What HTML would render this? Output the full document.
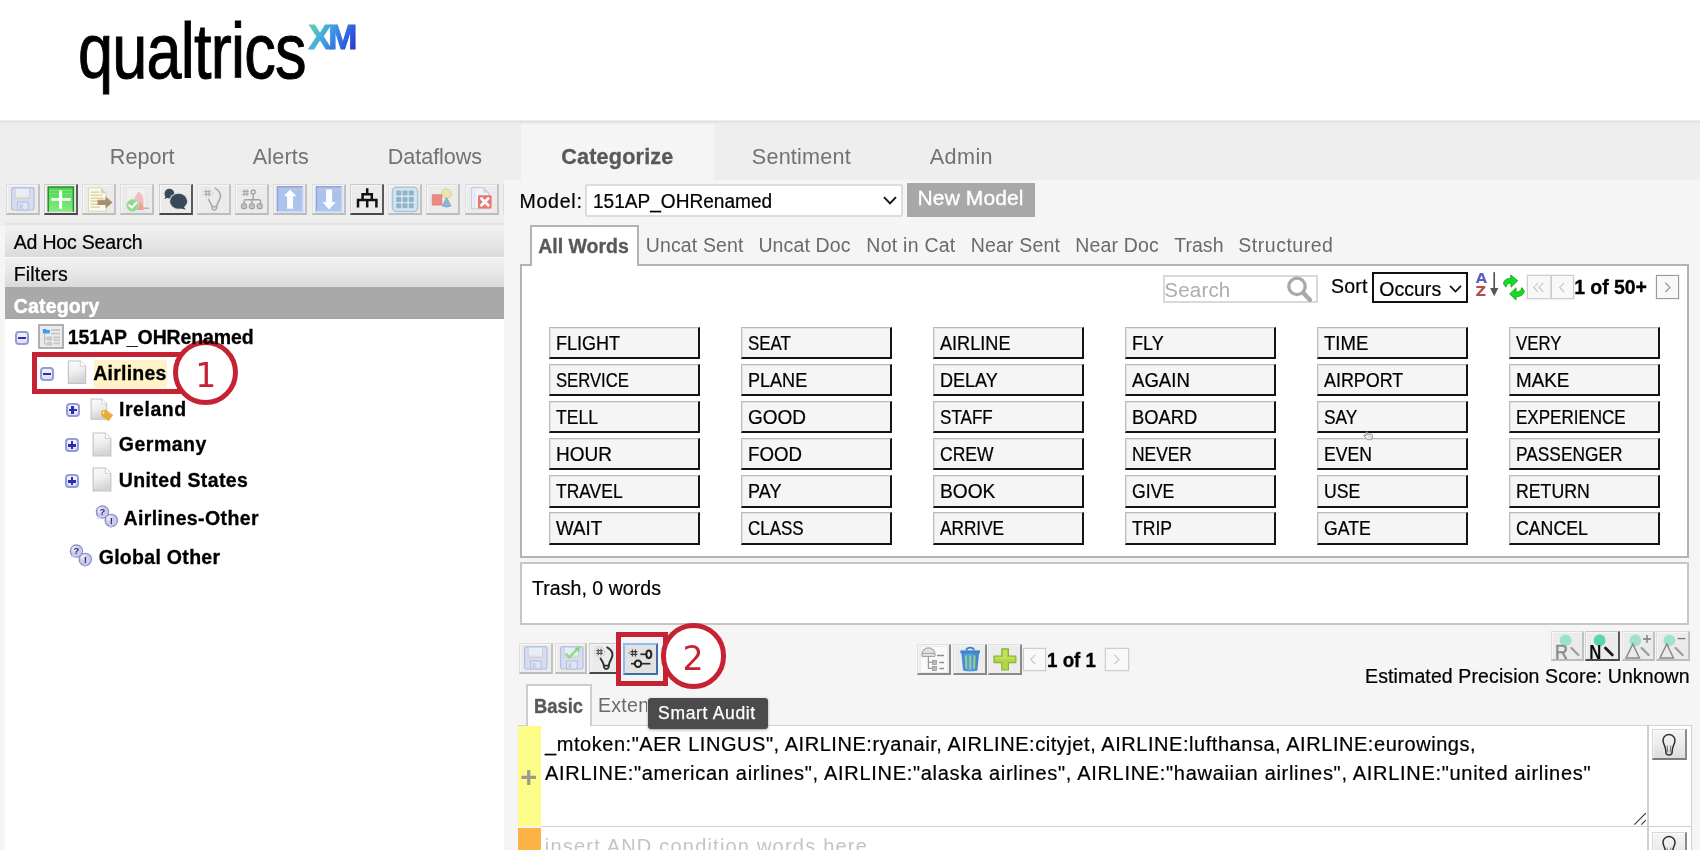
<!DOCTYPE html>
<html lang="en"><head><meta charset="utf-8"><title>Qualtrics XM - Categorize</title>
<style>
html,body{margin:0;padding:0;background:#f5f5f5;}
body{width:1700px;height:850px;overflow:hidden;font-family:"Liberation Sans",sans-serif;}
#page{will-change:transform;position:relative;width:1700px;height:850px;overflow:hidden;background:#f5f5f5;}
#page div{position:absolute;box-sizing:border-box;}
#page svg{position:absolute;left:0;top:0;overflow:visible;}
.t{position:absolute;white-space:pre;line-height:1;}
.btn{background:#ebebeb;border:solid;border-width:1px 2px 2px 1px;border-color:#dcdcdc #c2c2c2 #bcbcbc #dedede;box-shadow:inset 1px 1px 0 rgba(255,255,255,.55);}
.btn.on{border-color:#c8c8c8 #5a5a5a #4a4a4a #d0d0d0;}
.word{background:#f5f5f5;border:solid;border-width:1px 2px 2px 1px;border-color:#b9b9b9 #141414 #141414 #bdbdbd;box-shadow:inset 1px 1px 0 #e4e4e4;}
.pg{background:#f8f8f8;border:1px solid #cdcdcd;box-shadow:0 0 0 .5px #e4e4e4;}

</style></head>
<body>
<div id="page">
<div  style="left:0px;top:0px;width:1700px;height:120px;background:#fff;"></div>
<div  style="left:0px;top:119.6px;width:1700px;height:4.8px;background:linear-gradient(#f6f6f6,#dfdfdf 38%,#e7e7e7 62%,#eeeeee);z-index:1;"></div>
<div  style="left:0px;top:122px;width:1700px;height:58px;background:#eeeeee;"></div>
<div  style="left:0px;top:180px;width:504px;height:46px;background:#eeeeee;"></div>
<svg style="left:300px;top:15px" width="70" height="45" viewBox="0 0 70 45"><defs><linearGradient id="gXM" gradientUnits="userSpaceOnUse" x1="9" y1="9" x2="55" y2="36"><stop offset="0" stop-color="#62d6ac"/><stop offset=".4" stop-color="#3fa0e6"/><stop offset=".75" stop-color="#2f5fe0"/><stop offset="1" stop-color="#2a35d6"/></linearGradient></defs><text x="8.2" y="34.2" font-family="Liberation Sans, sans-serif" font-size="35" font-weight="700" letter-spacing="-3.4" fill="url(#gXM)" stroke="url(#gXM)" stroke-width="0.9">XM</text></svg>
<div  style="left:521px;top:124px;width:193px;height:56px;background:#f5f5f5;"></div>
<div class="btn" style="left:5.5px;top:184px;width:34px;height:30.6px;"></div>
<svg style="left:5.5px;top:184px;" width="34" height="31" viewBox="0 0 34 31"><rect x="5.6" y="3.6" width="22.4" height="22.4" rx="2.2" fill="#d6dcf2" stroke="#b6bfde" stroke-width="1.2"/><rect x="9.2" y="4.2" width="14.2" height="10.2" fill="#e9edf7" stroke="#c3cbe2" stroke-width=".8"/><rect x="9.6" y="12.6" width="13.4" height="1.4" fill="#eadfbe"/><rect x="11.6" y="18" width="10.6" height="8" fill="#dfe5f5" stroke="#b3bdda" stroke-width="1"/><rect x="13.6" y="20.2" width="3" height="5" fill="#c3cce4"/></svg>
<div class="btn on" style="left:43.75px;top:184px;width:34px;height:30.6px;"></div>
<svg style="left:43.75px;top:184px;" width="34" height="31" viewBox="0 0 34 31"><defs><linearGradient id="gA" x1="0" y1="0" x2="0" y2="1"><stop offset="0" stop-color="#4ed44e"/><stop offset=".45" stop-color="#62e262"/><stop offset="1" stop-color="#86ea86"/></linearGradient></defs><rect x="4.2" y="3" width="25.2" height="24.8" fill="url(#gA)"/><path d="M4.2 27.8 V3 H29.4 V27.8" fill="none" stroke="#2f8a2f" stroke-width="1.5"/><rect x="5.5" y="6" width="22.6" height="1" fill="#fff" opacity=".25"/><rect x="5.5" y="9" width="22.6" height="1" fill="#fff" opacity=".2"/><rect x="7.4" y="14" width="19.2" height="2.8" fill="#fff"/><rect x="15.1" y="6.2" width="3" height="18.6" fill="#fff"/></svg>
<div class="btn" style="left:82.0px;top:184px;width:34px;height:30.6px;"></div>
<svg style="left:82.0px;top:184px;" width="34" height="31" viewBox="0 0 34 31"><path d="M6.5 4 H19 L24.4 9.5 V27.2 H6.5 Z" fill="#fcfaec" stroke="#dcd6bf" stroke-width="1"/><path d="M19 4 V9.5 H24.4 Z" fill="#d9d3bd"/><g stroke="#d9cc96" stroke-width="1.3"><path d="M8.5 8.2H17.5M8.5 11.2H20M8.5 14.2H21.5M8.5 17.2H16M8.5 20.2H16M8.5 23.2H18"/></g><path d="M15.5 16 H23.6 V12.6 L30.4 18.5 L23.6 24.4 V21 H15.5 Z" fill="#a58d6d"/><path d="M15.5 16 H23.6 V12.6 L30.4 18.5" fill="none" stroke="#c4b294" stroke-width=".8"/></svg>
<div class="btn" style="left:120.25px;top:184px;width:34px;height:30.6px;"></div>
<svg style="left:120.25px;top:184px;" width="34" height="31" viewBox="0 0 34 31"><g opacity=".82"><rect x="6.2" y="3.6" width="20" height="23.4" fill="#f2f2f2" stroke="#e2e2e2" stroke-width="1"/><path d="M18.5 7.5 C22 9 24 14 23.6 20 L23.8 26 H14 C14 20 13 17 15 13 C16 10.5 17.5 9 18.5 7.5Z" fill="#f5b3b6"/><path d="M19.5 18 C22 19 23.6 22 23.7 26 H17 C17 23 18 20 19.5 18Z" fill="#f18f80"/><path d="M24 24.2 H29" stroke="#9a9a9a" stroke-width="1.2"/><circle cx="12.6" cy="21.4" r="6" fill="#7fd67c"/><circle cx="12.6" cy="21.4" r="6" fill="none" stroke="#a6e3a3" stroke-width="1"/><path d="M9.2 21.2 L11.8 23.8 L16.4 18.8" fill="none" stroke="#fff" stroke-width="2" stroke-linecap="round" stroke-linejoin="round"/></g></svg>
<div class="btn on" style="left:158.5px;top:184px;width:34px;height:30.6px;"></div>
<svg style="left:158.5px;top:184px;" width="34" height="31" viewBox="0 0 34 31"><circle cx="10.4" cy="9.6" r="4.9" fill="#3a4957"/><path d="M6.5 12 L5.6 15 L9.4 13.6Z" fill="#3a4957"/><ellipse cx="19.4" cy="17.2" rx="9.3" ry="8.3" fill="#cfd6dd"/><ellipse cx="19.6" cy="17.3" rx="8.5" ry="7.5" fill="#3a4957"/><path d="M23.5 22 L27 25.6 L21.5 24.4Z" fill="#3a4957"/></svg>
<div class="btn" style="left:196.75px;top:184px;width:34px;height:30.6px;"></div>
<svg style="left:196.75px;top:184px;" width="34" height="31" viewBox="0 0 34 31"><g fill="none" stroke="#a9a9a9" stroke-width="1.6" stroke-linecap="round" stroke-linejoin="round"><path d="M18.2 4.4 C21 6 23.8 9 23.4 12.6 C23 15.6 20.6 18.2 20 21.4 L19.4 24.6 C19 26.4 15.6 26.4 15.2 24.6 L14.6 21.6 C14.2 19.4 12.6 17.6 11.6 15.6"/><path d="M15.4 22.6 H19.6"/></g><g stroke="#adadad" stroke-width="1.2"><path d="M7.4 7.6H13.8M7.4 10.4H13.8M9.2 5.8V12.2M12 5.8V12.2"/></g><circle cx="10.6" cy="9" r="5.2" fill="none" stroke="#adadad" stroke-width=".7" stroke-dasharray="1.2 1.6" opacity=".6"/></svg>
<div class="btn" style="left:235.0px;top:184px;width:34px;height:30.6px;"></div>
<svg style="left:235.0px;top:184px;" width="34" height="31" viewBox="0 0 34 31"><g stroke="#a9a9a9" stroke-width="1.2"><path d="M7.4 7.4H13.8M7.4 10.2H13.8M9.2 5.6V12M12 5.6V12"/></g><g fill="none" stroke="#a2a2a2" stroke-width="1.4"><circle cx="18.2" cy="8" r="2"/><path d="M18.2 10V15.8M9 19.6V17.4Q9 15.8 10.6 15.8H24Q25.6 15.8 25.6 17.4V19.6M16.9 15.8V19.6"/><circle cx="9" cy="22.3" r="2.5"/><circle cx="16.9" cy="22.3" r="2.5"/><circle cx="24.7" cy="22.3" r="2.5"/></g><g fill="#b5b5b5"><circle cx="9" cy="22.3" r="1.2"/><circle cx="16.9" cy="22.3" r="1.2"/><circle cx="24.7" cy="22.3" r="1.2"/></g></svg>
<div class="btn" style="left:273.25px;top:184px;width:34px;height:30.6px;"></div>
<svg style="left:273.25px;top:184px;" width="34" height="31" viewBox="0 0 34 31"><defs><linearGradient id="gU" x1="0" y1="0" x2="0" y2="1"><stop offset="0" stop-color="#b5c4e6"/><stop offset=".35" stop-color="#a9c2ec"/><stop offset="1" stop-color="#aac6f0"/></linearGradient></defs><rect x="4.4" y="2.8" width="25.4" height="25" fill="url(#gU)"/><path d="M4.4 27.8 V2.8 H29.8" fill="none" stroke="#90a3d8" stroke-width="1.4"/><path d="M29.8 2.8 V27.8 H4.4" fill="none" stroke="#c9d8f4" stroke-width="1.4"/><path d="M17 5.4 L23.4 12.2 H20.1 V24.8 H14.1 V12.2 H10.8 Z" fill="#fdfdfe"/></svg>
<div class="btn" style="left:311.5px;top:184px;width:34px;height:30.6px;"></div>
<svg style="left:311.5px;top:184px;" width="34" height="31" viewBox="0 0 34 31"><defs><linearGradient id="gD" x1="0" y1="0" x2="0" y2="1"><stop offset="0" stop-color="#b5c4e6"/><stop offset=".35" stop-color="#a9c2ec"/><stop offset="1" stop-color="#aac6f0"/></linearGradient></defs><rect x="4.4" y="2.8" width="25.4" height="25" fill="url(#gD)"/><path d="M4.4 27.8 V2.8 H29.8" fill="none" stroke="#90a3d8" stroke-width="1.4"/><path d="M29.8 2.8 V27.8 H4.4" fill="none" stroke="#c9d8f4" stroke-width="1.4"/><path d="M14.1 5.4 H20.1 V18 H23.8 L17.1 25.4 L10.4 18 H14.1 Z" fill="#fdfdfe"/></svg>
<div class="btn on" style="left:349.75px;top:184px;width:34px;height:30.6px;"></div>
<svg style="left:349.75px;top:184px;" width="34" height="31" viewBox="0 0 34 31"><g fill="none" stroke="#111" stroke-width="2.5" stroke-linejoin="miter"><path d="M17.2 4.2V10M12.6 16V10.2H21.8V16M8 23.4V16H26.4V23.4M17.2 16V23.4"/></g></svg>
<div class="btn" style="left:388.0px;top:184px;width:34px;height:30.6px;"></div>
<svg style="left:388.0px;top:184px;" width="34" height="31" viewBox="0 0 34 31"><rect x="4.6" y="3.2" width="25" height="24.4" rx="4.2" fill="#d6e4ef" stroke="#a9c5da" stroke-width="1.5"/><g fill="#8fb3cb"><rect x="8.2" y="6.6" width="5" height="5" rx="1"/><rect x="8.2" y="12.9" width="5" height="5" rx="1"/><rect x="8.2" y="19.2" width="5" height="5" rx="1"/><rect x="14.5" y="6.6" width="5" height="5" rx="1"/><rect x="14.5" y="12.9" width="5" height="5" rx="1"/><rect x="14.5" y="19.2" width="5" height="5" rx="1"/><rect x="20.8" y="6.6" width="5" height="5" rx="1"/><rect x="20.8" y="12.9" width="5" height="5" rx="1"/><rect x="20.8" y="19.2" width="5" height="5" rx="1"/></g></svg>
<div class="btn" style="left:426.25px;top:184px;width:34px;height:30.6px;"></div>
<svg style="left:426.25px;top:184px;" width="34" height="31" viewBox="0 0 34 31"><circle cx="20.5" cy="9.6" r="4.8" fill="#ebe5ae" stroke="#d6cf90" stroke-width="1"/><path d="M20.6 13.6 L25 22 Q20.6 24 16.2 22 Z" fill="#8db5d6" stroke="#7aa3c6" stroke-width=".8"/><rect x="6.2" y="10.8" width="9.6" height="10.2" fill="#ea8b82" stroke="#dc7a72" stroke-width=".8"/></svg>
<div class="btn" style="left:464.5px;top:184px;width:34px;height:30.6px;"></div>
<svg style="left:464.5px;top:184px;" width="34" height="31" viewBox="0 0 34 31"><path d="M6.6 3.6 H18.4 L23.6 8.8 V24.8 H6.6 Z" fill="#eff2f9" stroke="#c6cfe2" stroke-width="1.1"/><path d="M18.4 3.6 V8.8 H23.6 Z" fill="#cdd5e6"/><path d="M9.4 4.2V24" stroke="#dfe4f0" stroke-width="1.4"/><rect x="13" y="11.3" width="13.6" height="13.2" rx="1" fill="#e9776f"/><path d="M16.4 14.6 L23.2 21.2 M23.2 14.6 L16.4 21.2" stroke="#fff" stroke-width="2.8" stroke-linecap="round"/></svg>
<div  style="left:502.6px;top:184px;width:1.3px;height:30.6px;background:#dddddd;"></div>
<div  style="left:5px;top:223.2px;width:499px;height:1.6px;background:#e2e2e2;"></div>
<div  style="left:5px;top:225.8px;width:499px;height:31px;background:linear-gradient(#f1f1f1,#e6e6e6 55%,#dadada);"></div>
<div  style="left:5px;top:256.8px;width:499px;height:1.6px;background:#fafafa;"></div>
<div  style="left:5px;top:258.3px;width:499px;height:29px;background:linear-gradient(#f1f1f1,#e6e6e6 55%,#dadada);"></div>
<div  style="left:5px;top:287px;width:499px;height:31.7px;background:#a9a9a9;border-bottom:1px solid #a0a0a0;"></div>
<div  style="left:5px;top:319px;width:499px;height:531px;background:#fff;"></div>
<div  style="left:14.6px;top:331px;width:14px;height:14px;border:2px solid #969bd8;border-radius:4px;background:linear-gradient(#f6f6ff,#dcdff6);"></div>
<div  style="left:17.6px;top:337px;width:8px;height:2.4px;background:#2a2fb0;"></div>
<svg style="left:38px;top:324px;" width="26" height="25" viewBox="0 0 26 25"><rect x="1" y="1" width="24" height="23" fill="#ebebeb" stroke="#a9a9a9" stroke-width="1.8"/><path d="M4.8 5 H8 L8.8 6 H11.8 V9.4 H4.8 Z" fill="#3d9be9"/><g fill="#c9c9c9"><rect x="13" y="5" width="9" height="2"/><rect x="13" y="8.6" width="9" height="2"/><rect x="9" y="12.4" width="5" height="4.2"/><rect x="15.4" y="12.4" width="6.6" height="2"/><rect x="15.4" y="15.4" width="6.6" height="1.6"/><rect x="9" y="18" width="5" height="3.6"/><rect x="15.4" y="18.4" width="6.6" height="2"/></g><path d="M6.6 10 V20 H9 M6.6 14.4 H9" fill="none" stroke="#bdbdbd" stroke-width="1.1"/></svg>
<div  style="left:94px;top:360px;width:72.5px;height:28px;background:#fff2c6;"></div>
<div  style="left:40.3px;top:366.6px;width:14px;height:14px;border:2px solid #969bd8;border-radius:4px;background:linear-gradient(#f6f6ff,#dcdff6);"></div>
<div  style="left:43.3px;top:372.6px;width:8px;height:2.4px;background:#2a2fb0;"></div>
<svg style="left:66.6px;top:360px;" width="20" height="24.5" viewBox="0 0 20 25"><defs><linearGradient id="gP" x1="0" y1="0" x2="0.25" y2="1"><stop offset="0" stop-color="#fbfbfb"/><stop offset=".5" stop-color="#f0f0f0"/><stop offset="1" stop-color="#d4d4d4"/></linearGradient></defs><path d="M1.2 1 H13.4 L18.8 6.4 V23.8 H1.2 Z" fill="url(#gP)" stroke="#c4c4c4" stroke-width="1.2"/><path d="M13.4 1 V6.4 H18.8" fill="#fff" stroke="#cfcfcf" stroke-width="1"/></svg>
<div  style="left:65.6px;top:402.6px;width:14px;height:14px;border:2px solid #969bd8;border-radius:4px;background:linear-gradient(#f6f6ff,#dcdff6);"></div>
<div  style="left:68.6px;top:408.6px;width:8px;height:2.4px;background:#2a2fb0;"></div>
<div  style="left:71.39999999999999px;top:405.6px;width:2.4px;height:8px;background:#2a2fb0;"></div>
<svg style="left:89.6px;top:396.5px;" width="24" height="24.5" viewBox="0 0 27 25"><defs><linearGradient id="gQ" x1="0" y1="0" x2="0.25" y2="1"><stop offset="0" stop-color="#fbfbfb"/><stop offset=".5" stop-color="#f0f0f0"/><stop offset="1" stop-color="#d4d4d4"/></linearGradient></defs><path d="M1.2 1 H13.4 L18.8 6.4 V23.8 H1.2 Z" fill="url(#gQ)" stroke="#c4c4c4" stroke-width="1.2"/><path d="M13.4 1 V6.4 H18.8" fill="#fff" stroke="#cfcfcf" stroke-width="1"/><g transform="translate(18.2,18.6) rotate(38)"><path d="M-7 0 L-3.6 -4.3 H6.6 V4.3 H-3.6 Z" fill="#e9ad3a"/><circle cx="-3.8" cy="0" r="1.1" fill="#fff3d0"/></g></svg>
<div  style="left:65.3px;top:438.4px;width:14px;height:14px;border:2px solid #969bd8;border-radius:4px;background:linear-gradient(#f6f6ff,#dcdff6);"></div>
<div  style="left:68.3px;top:444.4px;width:8px;height:2.4px;background:#2a2fb0;"></div>
<div  style="left:71.1px;top:441.4px;width:2.4px;height:8px;background:#2a2fb0;"></div>
<svg style="left:92.4px;top:431.7px;" width="20" height="25" viewBox="0 0 20 25"><defs><linearGradient id="gP" x1="0" y1="0" x2="0.25" y2="1"><stop offset="0" stop-color="#fbfbfb"/><stop offset=".5" stop-color="#f0f0f0"/><stop offset="1" stop-color="#d4d4d4"/></linearGradient></defs><path d="M1.2 1 H13.4 L18.8 6.4 V23.8 H1.2 Z" fill="url(#gP)" stroke="#c4c4c4" stroke-width="1.2"/><path d="M13.4 1 V6.4 H18.8" fill="#fff" stroke="#cfcfcf" stroke-width="1"/></svg>
<div  style="left:65.3px;top:474.2px;width:14px;height:14px;border:2px solid #969bd8;border-radius:4px;background:linear-gradient(#f6f6ff,#dcdff6);"></div>
<div  style="left:68.3px;top:480.2px;width:8px;height:2.4px;background:#2a2fb0;"></div>
<div  style="left:71.1px;top:477.2px;width:2.4px;height:8px;background:#2a2fb0;"></div>
<svg style="left:92.4px;top:467.4px;" width="20" height="25" viewBox="0 0 20 25"><defs><linearGradient id="gP" x1="0" y1="0" x2="0.25" y2="1"><stop offset="0" stop-color="#fbfbfb"/><stop offset=".5" stop-color="#f0f0f0"/><stop offset="1" stop-color="#d4d4d4"/></linearGradient></defs><path d="M1.2 1 H13.4 L18.8 6.4 V23.8 H1.2 Z" fill="url(#gP)" stroke="#c4c4c4" stroke-width="1.2"/><path d="M13.4 1 V6.4 H18.8" fill="#fff" stroke="#cfcfcf" stroke-width="1"/></svg>
<svg style="left:96px;top:506px;" width="22.5" height="22.5" viewBox="0 0 23 23"><g stroke="#8c8cc6" stroke-width="1.2" fill="#cbcbf2"><circle cx="6.6" cy="6.2" r="6.3"/><path d="M2.2 10.2 L1.2 13.4 L5.2 12Z" stroke="none"/><circle cx="15.6" cy="14.7" r="6.3"/><path d="M17.6 20.2 L15.2 23 L13.2 20.4Z" stroke="none" fill="#b9b9ea"/></g><circle cx="4.6" cy="4.2" r="2.8" fill="#fff" opacity=".5"/><circle cx="13.6" cy="12.6" r="2.8" fill="#fff" opacity=".5"/><text x="6.6" y="9.6" font-family="Liberation Sans, sans-serif" font-size="9.6" font-weight="700" text-anchor="middle" fill="#2e2e46">?</text><text x="15.6" y="18.4" font-family="Liberation Sans, sans-serif" font-size="9.8" font-weight="700" text-anchor="middle" fill="#2e2e46">!</text></svg>
<svg style="left:70.2px;top:545px;" width="22.5" height="22.5" viewBox="0 0 23 23"><g stroke="#8c8cc6" stroke-width="1.2" fill="#cbcbf2"><circle cx="6.6" cy="6.2" r="6.3"/><path d="M2.2 10.2 L1.2 13.4 L5.2 12Z" stroke="none"/><circle cx="15.6" cy="14.7" r="6.3"/><path d="M17.6 20.2 L15.2 23 L13.2 20.4Z" stroke="none" fill="#b9b9ea"/></g><circle cx="4.6" cy="4.2" r="2.8" fill="#fff" opacity=".5"/><circle cx="13.6" cy="12.6" r="2.8" fill="#fff" opacity=".5"/><text x="6.6" y="9.6" font-family="Liberation Sans, sans-serif" font-size="9.6" font-weight="700" text-anchor="middle" fill="#2e2e46">?</text><text x="15.6" y="18.4" font-family="Liberation Sans, sans-serif" font-size="9.8" font-weight="700" text-anchor="middle" fill="#2e2e46">!</text></svg>
<div  style="left:32px;top:352.1px;width:150px;height:41.5px;border:5.7px solid #c52233;"></div>
<div  style="left:173.1px;top:339.8px;width:65.2px;height:65.2px;border:5.7px solid #c52233;border-radius:50%;background:#fff;"></div>
<div  style="left:584.8px;top:184.2px;width:318.6px;height:32.7px;background:#fff;border:2px solid #dcdcdc;border-radius:2px;"></div>
<svg style="left:881.7px;top:194.3px;" width="16" height="12" viewBox="0 0 16 12"><path d="M2 3.2 L8 9.4 L14 3.2" fill="none" stroke="#111" stroke-width="1.9"/></svg>
<div  style="left:906.7px;top:183.2px;width:128.2px;height:34.3px;background:#a8a8a8;"></div>
<div  style="left:519.6px;top:264px;width:1169.8px;height:294px;background:#fff;border:2px solid #b3b3b3;"></div>
<div  style="left:529.5px;top:225px;width:109.5px;height:41px;background:#fff;border:2px solid #b3b3b3;border-bottom:none;"></div>
<div  style="left:1163px;top:275.2px;width:155.4px;height:27.8px;background:#fff;border:2px solid #d9d9d9;"></div>
<svg style="left:1287px;top:276.5px;" width="25" height="25" viewBox="0 0 25 25"><circle cx="10" cy="9.4" r="8.2" fill="none" stroke="#a9a9a9" stroke-width="3.3"/><path d="M16.6 16.2 L23 23" stroke="#a9a9a9" stroke-width="4.4" stroke-linecap="round"/></svg>
<div  style="left:1371.7px;top:272px;width:96.3px;height:31px;background:#fff;border:2px solid #111;"></div>
<svg style="left:1447.5px;top:282.5px;" width="15" height="11" viewBox="0 0 16 12"><path d="M2 3.2 L8 9.4 L14 3.2" fill="none" stroke="#111" stroke-width="1.9"/></svg>
<svg style="left:1475px;top:272px;" width="25" height="25" viewBox="0 0 25 25"><text x="6.5" y="10.9" font-family="DejaVu Sans, sans-serif" font-size="14.6" font-weight="700" text-anchor="middle" fill="#5d5dbd">A</text><text x="5.8" y="23.8" font-family="DejaVu Sans, sans-serif" font-size="14.6" font-weight="700" text-anchor="middle" fill="#b44c4c">Z</text><path d="M19.2 0.2 V18" stroke="#555" stroke-width="1.7"/><path d="M15.1 15.9 H23.3 L19.2 24.2 Z" fill="#555"/></svg>
<svg style="left:1502.5px;top:274.5px;" width="22" height="26" viewBox="0 0 22 26"><g fill="#16dc24" stroke="#0c9c16" stroke-width=".8" stroke-linejoin="round"><path d="M7.75 3.25 L7.75 -0.1 L14.75 5.8 L8.2 12.1 L7.75 7.9 C5 8 3.5 9 3.1 12.1 L0.55 9 C0.6 5.5 3 3.5 7.75 3.25 Z"/><path d="M13.05 21.7 L13.05 25.1 L6.7 18.9 L13.05 12.8 L13.05 17.2 C16.5 17 18.3 15.5 18.8 12.6 L21.3 16 C21 19.5 18 21.5 13.05 21.7 Z"/></g></svg>
<div class="pg" style="left:1527px;top:275.2px;width:23.8px;height:23.6px;"></div>
<div class="pg" style="left:1550.8px;top:275.2px;width:23.4px;height:23.6px;"></div>
<svg style="left:1532px;top:281.6px;" width="13" height="10.8" viewBox="0 0 15 13"><path d="M7 1 L1.6 6.5 L7 12 M13.4 1 L8 6.5 L13.4 12" fill="none" stroke="#cdcdcd" stroke-width="1.5"/></svg>
<svg style="left:1558.4px;top:281.6px;" width="7.6" height="10.8" viewBox="0 0 9 13"><path d="M7.4 1 L2 6.5 L7.4 12" fill="none" stroke="#c9c9c9" stroke-width="1.5"/></svg>
<div class="pg" style="left:1655.8px;top:275.2px;width:23.4px;height:23.6px;border-color:#9a9a9a;"></div>
<svg style="left:1663.6px;top:281.6px;" width="7.6" height="10.8" viewBox="0 0 9 13"><path d="M1.6 1 L7 6.5 L1.6 12" fill="none" stroke="#9a9a9a" stroke-width="1.6"/></svg>
<div class="word" style="left:548.9px;top:326.5px;width:151.3px;height:32.5px;"></div>
<div class="word" style="left:548.9px;top:363.6px;width:151.3px;height:32.5px;"></div>
<div class="word" style="left:548.9px;top:400.7px;width:151.3px;height:32.5px;"></div>
<div class="word" style="left:548.9px;top:437.9px;width:151.3px;height:32.5px;"></div>
<div class="word" style="left:548.9px;top:475.0px;width:151.3px;height:32.5px;"></div>
<div class="word" style="left:548.9px;top:512.1px;width:151.3px;height:32.5px;"></div>
<div class="word" style="left:740.9px;top:326.5px;width:151.3px;height:32.5px;"></div>
<div class="word" style="left:740.9px;top:363.6px;width:151.3px;height:32.5px;"></div>
<div class="word" style="left:740.9px;top:400.7px;width:151.3px;height:32.5px;"></div>
<div class="word" style="left:740.9px;top:437.9px;width:151.3px;height:32.5px;"></div>
<div class="word" style="left:740.9px;top:475.0px;width:151.3px;height:32.5px;"></div>
<div class="word" style="left:740.9px;top:512.1px;width:151.3px;height:32.5px;"></div>
<div class="word" style="left:932.9px;top:326.5px;width:151.3px;height:32.5px;"></div>
<div class="word" style="left:932.9px;top:363.6px;width:151.3px;height:32.5px;"></div>
<div class="word" style="left:932.9px;top:400.7px;width:151.3px;height:32.5px;"></div>
<div class="word" style="left:932.9px;top:437.9px;width:151.3px;height:32.5px;"></div>
<div class="word" style="left:932.9px;top:475.0px;width:151.3px;height:32.5px;"></div>
<div class="word" style="left:932.9px;top:512.1px;width:151.3px;height:32.5px;"></div>
<div class="word" style="left:1124.9px;top:326.5px;width:151.3px;height:32.5px;"></div>
<div class="word" style="left:1124.9px;top:363.6px;width:151.3px;height:32.5px;"></div>
<div class="word" style="left:1124.9px;top:400.7px;width:151.3px;height:32.5px;"></div>
<div class="word" style="left:1124.9px;top:437.9px;width:151.3px;height:32.5px;"></div>
<div class="word" style="left:1124.9px;top:475.0px;width:151.3px;height:32.5px;"></div>
<div class="word" style="left:1124.9px;top:512.1px;width:151.3px;height:32.5px;"></div>
<div class="word" style="left:1316.9px;top:326.5px;width:151.3px;height:32.5px;"></div>
<div class="word" style="left:1316.9px;top:363.6px;width:151.3px;height:32.5px;"></div>
<div class="word" style="left:1316.9px;top:400.7px;width:151.3px;height:32.5px;"></div>
<div class="word" style="left:1316.9px;top:437.9px;width:151.3px;height:32.5px;"></div>
<div class="word" style="left:1316.9px;top:475.0px;width:151.3px;height:32.5px;"></div>
<div class="word" style="left:1316.9px;top:512.1px;width:151.3px;height:32.5px;"></div>
<div class="word" style="left:1508.9px;top:326.5px;width:151.3px;height:32.5px;"></div>
<div class="word" style="left:1508.9px;top:363.6px;width:151.3px;height:32.5px;"></div>
<div class="word" style="left:1508.9px;top:400.7px;width:151.3px;height:32.5px;"></div>
<div class="word" style="left:1508.9px;top:437.9px;width:151.3px;height:32.5px;"></div>
<div class="word" style="left:1508.9px;top:475.0px;width:151.3px;height:32.5px;"></div>
<div class="word" style="left:1508.9px;top:512.1px;width:151.3px;height:32.5px;"></div>
<svg style="left:1363.4px;top:431.2px;z-index:3;" width="10.4" height="9.4" viewBox="0 0 11 10"><path d="M3.4 1.1 C4.2 0.6 4.8 1.2 4.8 2 L4.9 3.6 L8.6 3.3 C9.8 3.4 10.1 4.6 10 5.6 L9.7 7.8 C9.3 9 8 9.4 6.6 9.3 C5 9.2 4 8.8 3 7.6 L1.1 5.1 C0.7 4.3 1.7 3.8 2.3 4.4 L3.2 5.3 Z" fill="#fafafa" stroke="#7a7a7a" stroke-width=".9" stroke-linejoin="round"/><path d="M5 5.6 H9.6 M5.2 7.2 H9.4" stroke="#b5b5b5" stroke-width=".6"/></svg>
<div  style="left:519.6px;top:562px;width:1169.8px;height:63.4px;background:#fff;border:2px solid #c6c6c6;"></div>
<div class="btn" style="left:518.7px;top:643px;width:33.9px;height:31.1px;"></div>
<svg style="left:518.7px;top:643px;" width="34" height="31" viewBox="0 0 34 31"><rect x="5.6" y="3.6" width="22.4" height="22.4" rx="2.2" fill="#d6dcf2" stroke="#b6bfde" stroke-width="1.2"/><rect x="9.2" y="4.2" width="14.2" height="10.2" fill="#e9edf7" stroke="#c3cbe2" stroke-width=".8"/><rect x="9.6" y="12.6" width="13.4" height="1.4" fill="#eadfbe"/><rect x="11.6" y="18" width="10.6" height="8" fill="#dfe5f5" stroke="#b3bdda" stroke-width="1"/><rect x="13.6" y="20.2" width="3" height="5" fill="#c3cce4"/></svg>
<div class="btn" style="left:554.5px;top:643px;width:32.9px;height:31.1px;"></div>
<svg style="left:554.5px;top:643px;" width="34" height="31" viewBox="0 0 34 31"><rect x="5.6" y="3.6" width="22.4" height="22.4" rx="2.2" fill="#d6dcf2" stroke="#b6bfde" stroke-width="1.2"/><rect x="9.2" y="4.2" width="14.2" height="10.2" fill="#e9edf7" stroke="#c3cbe2" stroke-width=".8"/><rect x="9.6" y="12.6" width="13.4" height="1.4" fill="#eadfbe"/><rect x="11.6" y="18" width="10.6" height="8" fill="#dfe5f5" stroke="#b3bdda" stroke-width="1"/><rect x="13.6" y="20.2" width="3" height="5" fill="#c3cce4"/><path d="M11.4 11.4 L14.4 14.4 L21.6 6.6" fill="none" stroke="#86dc7c" stroke-width="2.6" stroke-linecap="round" stroke-linejoin="round" opacity=".9"/><path d="M19.4 4.8 L25 4 L24 9.6 Z" fill="#7bd870" opacity=".9"/></svg>
<div class="btn on" style="left:588.8px;top:643px;width:30px;height:31.1px;"></div>
<svg style="left:588.8px;top:643px;" width="34" height="31" viewBox="0 0 34 31"><g fill="none" stroke="#2e2e2e" stroke-width="1.9" stroke-linecap="round" stroke-linejoin="round"><path d="M18.2 4.4 C21 6 23.8 9 23.4 12.6 C23 15.6 20.6 18.2 20 21.4 L19.4 24.6 C19 26.4 15.6 26.4 15.2 24.6 L14.6 21.6 C14.2 19.4 12.6 17.6 11.6 15.6"/><path d="M15.4 22.6 H19.6"/></g><g stroke="#555" stroke-width="1.2"><path d="M7.4 7.6H13.8M7.4 10.4H13.8M9.2 5.8V12.2M12 5.8V12.2"/></g><circle cx="10.6" cy="9" r="5.2" fill="none" stroke="#555" stroke-width=".7" stroke-dasharray="1.2 1.6" opacity=".6"/></svg>
<div  style="left:623.2px;top:642.6px;width:35.3px;height:32.9px;background:#e2e2e2;border:2px solid;border-color:#8fbcf2 #3f6eab #3f6eab #8fbcf2;"></div>
<svg style="left:623.2px;top:642.6px;" width="36" height="33" viewBox="0 0 36 33"><g stroke="#3a3a3a" stroke-width="1.1"><path d="M7.4 8.6H14.4M7.4 11.4H14.4M9.4 6.4V13.6M12.4 6.4V13.6"/></g><path d="M5.4 10 h1.2" stroke="#555" stroke-width="1.2"/><path d="M17.4 11.3 H23" stroke="#2b2b2b" stroke-width="1.7"/><ellipse cx="25.8" cy="11.3" rx="2.5" ry="3.9" fill="none" stroke="#222" stroke-width="2"/><path d="M8 20.7 H27.4" stroke="#2b2b2b" stroke-width="1.7"/><circle cx="15" cy="20.7" r="3.2" fill="#e3e3e3" stroke="#222" stroke-width="2"/></svg>
<div  style="left:616.1px;top:631.9px;width:51.8px;height:53.9px;border:5.7px solid #c52233;"></div>
<div  style="left:660.9px;top:623.4px;width:65.2px;height:65.2px;border:5.7px solid #c52233;border-radius:50%;background:#fff;"></div>
<div class="btn" style="left:917.4px;top:643.8px;width:34px;height:31.2px;background:#ececec;border-color:#e0e0e0 #8a8a8a #8a8a8a #e0e0e0;"></div>
<svg style="left:917.4px;top:643.8px;" width="34" height="31" viewBox="0 0 34 31"><rect x="4.2" y="3" width="25.6" height="25" fill="#fafafa"/><path d="M5 9.4 L6.6 5.4 H8.2 L9 4 H14 L14.8 5.4 H16.4 L18 9.4 V12.4 H5 Z" fill="#e1e1e1" stroke="#9c9c9c" stroke-width="1"/><path d="M5 9.4 H18" stroke="#9c9c9c" stroke-width=".9"/><path d="M11.4 12.4 V24.4 H15.4 M11.4 18.4 H15.4" fill="none" stroke="#9a9a9a" stroke-width="1.3"/><rect x="15.4" y="16.4" width="4.2" height="4" fill="#b9b9b9" stroke="#8f8f8f" stroke-width=".7"/><rect x="15.4" y="22.4" width="4.2" height="4" fill="#b9b9b9" stroke="#8f8f8f" stroke-width=".7"/><path d="M20 11.6 H27 M22.4 18.4 H27 M22.4 24.4 H27" stroke="#8f8f8f" stroke-width="1.5"/></svg>
<div class="btn" style="left:952.6px;top:643.8px;width:34px;height:31.2px;background:#ececec;border-color:#e0e0e0 #8a8a8a #8a8a8a #e0e0e0;"></div>
<svg style="left:952.6px;top:643.8px;" width="34" height="31" viewBox="0 0 34 31"><defs><linearGradient id="gT" x1="0" y1="0" x2="1" y2="0"><stop offset="0" stop-color="#3f86cf"/><stop offset=".5" stop-color="#5ba3e3"/><stop offset="1" stop-color="#3b7fc6"/></linearGradient></defs><path d="M8.4 9 H26 L24.4 26.4 Q17.2 28.4 10 26.4 Z" fill="url(#gT)"/><path d="M7.4 6.4 H27 V9.2 H7.4 Z" fill="#3d82ca"/><path d="M13.4 6.4 Q13.6 3.6 17.2 3.6 Q20.8 3.6 21 6.4" fill="none" stroke="#3d82ca" stroke-width="1.8"/><g stroke="#8fd08a" stroke-width="2"><path d="M12.8 11.4 L13.4 24.6 M17.2 11.4 V25 M21.6 11.4 L21 24.6"/></g></svg>
<div class="btn" style="left:987.8px;top:643.8px;width:34px;height:31.2px;background:#ececec;border-color:#e0e0e0 #8a8a8a #8a8a8a #e0e0e0;"></div>
<svg style="left:987.8px;top:643.8px;" width="34" height="31" viewBox="0 0 34 31"><path d="M13.8 4.8 H20.4 V12 H27.8 V18.6 H20.4 V26 H13.8 V18.6 H6 V12 H13.8 Z" fill="#b2d646" stroke="#86b534" stroke-width="1.2" stroke-linejoin="round"/><path d="M15 6.2 H19.2 V13.2 H26.6 V15 H7.2 V13.2 H15 Z" fill="#c6e268" opacity=".8"/></svg>
<div class="pg" style="left:1022.8px;top:647.8px;width:23.2px;height:22.8px;"></div>
<svg style="left:1029.4px;top:654.2px;" width="7.6" height="10.8" viewBox="0 0 9 13"><path d="M7.4 1 L2 6.5 L7.4 12" fill="none" stroke="#c9c9c9" stroke-width="1.5"/></svg>
<div class="pg" style="left:1105.4px;top:647.8px;width:23.3px;height:22.8px;"></div>
<svg style="left:1113.4px;top:654.2px;" width="7.6" height="10.8" viewBox="0 0 9 13"><path d="M1.6 1 L7 6.5 L1.6 12" fill="none" stroke="#c9c9c9" stroke-width="1.5"/></svg>
<div class="btn" style="left:1550.6px;top:630.7px;width:33px;height:30.5px;"></div>
<svg style="left:1550.6px;top:630.7px;" width="34" height="31" viewBox="0 0 34 31"><circle cx="14.6" cy="9.4" r="5.9" fill="#86e2bd" opacity=".8"/><path d="M20.4 17 L27.4 24" stroke="#9d9d9d" stroke-width="2.3" stroke-linecap="round"/><text transform="translate(10.4,27.7) scale(0.86,1)" x="0" y="0" font-family="Liberation Sans, sans-serif" font-size="21" font-weight="400" text-anchor="middle" fill="#8a8a8a" stroke="#8a8a8a" stroke-width="0.5">R</text></svg>
<div class="btn on" style="left:1585px;top:630.7px;width:35.2px;height:30.5px;"></div>
<svg style="left:1585px;top:630.7px;" width="34" height="31" viewBox="0 0 34 31"><circle cx="14.6" cy="9.4" r="5.9" fill="#4fd6a0" opacity=".95"/><path d="M20.4 17 L27.4 24" stroke="#1a1a1a" stroke-width="2.8" stroke-linecap="round"/><text transform="translate(10.4,27.7) scale(0.8,1)" x="0" y="0" font-family="Liberation Sans, sans-serif" font-size="21" font-weight="700" text-anchor="middle" fill="#0a0a0a" stroke="#0a0a0a" stroke-width="0">N</text></svg>
<div class="btn" style="left:1621.5px;top:630.7px;width:33.3px;height:30.5px;"></div>
<svg style="left:1621.5px;top:630.7px;" width="34" height="31" viewBox="0 0 34 31"><circle cx="13.4" cy="9.4" r="5.9" fill="#86e2bd" opacity=".75"/><path d="M19.6 17 L26.6 24" stroke="#9d9d9d" stroke-width="2.3" stroke-linecap="round"/><path d="M10.8 13 L4 27 H17.4 Z" fill="none" stroke="#8a8a8a" stroke-width="1.5" stroke-linejoin="miter"/><path d="M21 8 H29 M25 4 V12" stroke="#777" stroke-width="1.3"/></svg>
<div class="btn" style="left:1656.2px;top:630.7px;width:33.8px;height:30.5px;"></div>
<svg style="left:1656.2px;top:630.7px;" width="34" height="31" viewBox="0 0 34 31"><circle cx="13.4" cy="9.4" r="5.9" fill="#86e2bd" opacity=".75"/><path d="M19.6 17 L26.6 24" stroke="#9d9d9d" stroke-width="2.3" stroke-linecap="round"/><path d="M10.8 13 L4 27 H17.4 Z" fill="none" stroke="#8a8a8a" stroke-width="1.5" stroke-linejoin="miter"/><path d="M21.6 7.6 H29.4" stroke="#777" stroke-width="1.3"/></svg>
<div  style="left:518px;top:724.5px;width:1174px;height:2px;background:#d2d2d2;"></div>
<div  style="left:526.2px;top:684.3px;width:65.4px;height:41.7px;background:#fff;border:2px solid #cecece;border-bottom:none;"></div>
<div  style="left:541px;top:726px;width:1151px;height:124px;background:#fff;"></div>
<div  style="left:517.7px;top:725.6px;width:23px;height:100.4px;background:#fefc88;"></div>
<div  style="left:517.7px;top:828px;width:23px;height:22px;background:#fdb245;"></div>
<div  style="left:541px;top:825.6px;width:1151px;height:1.8px;background:#d0d0d0;"></div>
<div  style="left:1647px;top:726px;width:1.6px;height:124px;background:#d0d0d0;"></div>
<div  style="left:1690.6px;top:726px;width:1.6px;height:124px;background:#d0d0d0;"></div>
<svg style="left:1633px;top:812px;" width="14" height="14" viewBox="0 0 14 14"><path d="M1.4 12.6 L12.8 1.2 M8.4 12.6 L12.8 8.2" stroke="#333" stroke-width="1.1"/></svg>
<div class="btn" style="left:1652.1px;top:729.1px;width:34.8px;height:31.3px;background:linear-gradient(#f5f5f5,#ececec 50%,#dcdcdc);border-color:#d6d6d6 #8a8a8a #7c7c7c #d6d6d6;"></div>
<svg style="left:1659.4px;top:732.5px;" width="20" height="24" viewBox="0 0 20 24"><path d="M10 1.6 C14.4 1.6 16.6 5.4 15.8 8.8 C15.2 11.4 13.8 13.4 13.4 16.4 L13 20 C12.6 22.6 7.4 22.6 7 20 L6.6 16.4 C6.2 13.4 4.8 11.4 4.2 8.8 C3.4 5.4 5.6 1.6 10 1.6Z" fill="none" stroke="#2f2f2f" stroke-width="1.5"/><path d="M8.2 12.6 L8.8 19.6 M11.8 12.6 L11.2 19.6" stroke="#666" stroke-width=".9"/></svg>
<div class="btn" style="left:1652.1px;top:832px;width:34.8px;height:31.3px;background:linear-gradient(#f5f5f5,#ececec 50%,#dcdcdc);border-color:#d6d6d6 #8a8a8a #7c7c7c #d6d6d6;"></div>
<svg style="left:1659.4px;top:835.4px;" width="20" height="24" viewBox="0 0 20 24"><path d="M10 1.6 C14.4 1.6 16.6 5.4 15.8 8.8 C15.2 11.4 13.8 13.4 13.4 16.4 L13 20 C12.6 22.6 7.4 22.6 7 20 L6.6 16.4 C6.2 13.4 4.8 11.4 4.2 8.8 C3.4 5.4 5.6 1.6 10 1.6Z" fill="none" stroke="#2f2f2f" stroke-width="1.5"/><path d="M8.2 12.6 L8.8 19.6 M11.8 12.6 L11.2 19.6" stroke="#666" stroke-width=".9"/></svg>
<div  style="left:648.4px;top:697.8px;width:119.3px;height:31px;background:#4b4b4b;border-radius:3px;box-shadow:0 1px 3px rgba(0,0,0,.35);z-index:5;"></div>
<span class="t" style="left:77.50px;top:11.97px;font-size:78px;transform-origin:0 0;transform:scaleX(0.809);letter-spacing:-1px;-webkit-text-stroke:1px #000;">qualtrics</span>
<span class="t" style="left:109.80px;top:145.82px;font-size:21.6px;color:#727272;">Report</span>
<span class="t" style="left:252.80px;top:145.82px;font-size:21.6px;color:#727272;letter-spacing:0.166px;">Alerts</span>
<span class="t" style="left:387.80px;top:145.82px;font-size:21.6px;color:#727272;letter-spacing:-0.068px;">Dataflows</span>
<span class="t" style="left:561.20px;top:146.42px;font-size:21.6px;font-weight:700;color:#585858;letter-spacing:0.199px;-webkit-text-stroke:0.3px;">Categorize</span>
<span class="t" style="left:751.80px;top:145.82px;font-size:21.6px;color:#727272;letter-spacing:0.218px;">Sentiment</span>
<span class="t" style="left:929.80px;top:145.82px;font-size:21.6px;color:#727272;letter-spacing:0.396px;">Admin</span>
<span class="t" style="left:13.80px;top:233.29px;font-size:19.5px;letter-spacing:-0.197px;-webkit-text-stroke:0.22px;">Ad Hoc Search</span>
<span class="t" style="left:13.80px;top:264.89px;font-size:19.5px;letter-spacing:0.158px;-webkit-text-stroke:0.22px;">Filters</span>
<span class="t" style="left:13.80px;top:296.69px;font-size:19.5px;font-weight:700;color:#fff;letter-spacing:0.159px;text-shadow:0 0 1px rgba(255,255,255,.6);-webkit-text-stroke:0.3px;">Category</span>
<span class="t" style="left:67.80px;top:328.29px;font-size:19.5px;font-weight:700;letter-spacing:-0.113px;-webkit-text-stroke:0.3px;">151AP_OHRenamed</span>
<span class="t" style="left:93.30px;top:363.99px;font-size:19.5px;font-weight:700;letter-spacing:0.209px;-webkit-text-stroke:0.3px;">Airlines</span>
<span class="t" style="left:119.00px;top:399.89px;font-size:19.5px;font-weight:700;letter-spacing:0.538px;-webkit-text-stroke:0.3px;">Ireland</span>
<span class="t" style="left:118.80px;top:435.29px;font-size:19.5px;font-weight:700;letter-spacing:0.493px;-webkit-text-stroke:0.3px;">Germany</span>
<span class="t" style="left:118.80px;top:471.49px;font-size:19.5px;font-weight:700;letter-spacing:0.369px;-webkit-text-stroke:0.3px;">United States</span>
<span class="t" style="left:123.50px;top:509.09px;font-size:19.5px;font-weight:700;letter-spacing:0.383px;-webkit-text-stroke:0.3px;">Airlines-Other</span>
<span class="t" style="left:98.70px;top:548.29px;font-size:19.5px;font-weight:700;letter-spacing:0.299px;-webkit-text-stroke:0.3px;">Global Other</span>
<span class="t" style="left:195.20px;top:358.87px;font-size:33px;color:#c52233;font-family:&quot;DejaVu Sans&quot;, sans-serif;">1</span>
<span class="t" style="left:519.40px;top:191.69px;font-size:19.5px;letter-spacing:0.778px;-webkit-text-stroke:0.22px;">Model:</span>
<span class="t" style="left:592.80px;top:192.09px;font-size:19.5px;transform-origin:0 50%;transform:scaleX(0.9781);-webkit-text-stroke:0.22px;">151AP_OHRenamed</span>
<span class="t" style="left:917.60px;top:187.32px;font-size:21px;color:#fff;letter-spacing:0.095px;-webkit-text-stroke:0.35px #fff;">New Model</span>
<span class="t" style="left:538.20px;top:236.79px;font-size:19.5px;font-weight:700;color:#585858;-webkit-text-stroke:0.3px;">All Words</span>
<span class="t" style="left:645.80px;top:235.79px;font-size:19.5px;color:#6a6a6a;letter-spacing:0.122px;">Uncat Sent</span>
<span class="t" style="left:758.40px;top:235.79px;font-size:19.5px;color:#6a6a6a;letter-spacing:0.128px;">Uncat Doc</span>
<span class="t" style="left:866.30px;top:235.79px;font-size:19.5px;color:#6a6a6a;letter-spacing:0.250px;">Not in Cat</span>
<span class="t" style="left:970.80px;top:235.79px;font-size:19.5px;color:#6a6a6a;letter-spacing:0.154px;">Near Sent</span>
<span class="t" style="left:1075.30px;top:235.79px;font-size:19.5px;color:#6a6a6a;letter-spacing:0.166px;">Near Doc</span>
<span class="t" style="left:1174.30px;top:235.79px;font-size:19.5px;color:#6a6a6a;letter-spacing:0.015px;">Trash</span>
<span class="t" style="left:1238.30px;top:235.79px;font-size:19.5px;color:#6a6a6a;letter-spacing:0.523px;">Structured</span>
<span class="t" style="left:1164.30px;top:279.65px;font-size:20.5px;color:#adadad;letter-spacing:0.205px;">Search</span>
<span class="t" style="left:1331.00px;top:277.29px;font-size:19.5px;letter-spacing:0.259px;-webkit-text-stroke:0.22px;">Sort</span>
<span class="t" style="left:1379.20px;top:279.89px;font-size:19.5px;letter-spacing:0.039px;-webkit-text-stroke:0.22px;">Occurs</span>
<span class="t" style="left:1574.30px;top:278.29px;font-size:19.5px;font-weight:700;letter-spacing:-0.096px;-webkit-text-stroke:0.3px;">1 of 50+</span>
<span class="t" style="left:555.90px;top:334.49px;font-size:19.5px;transform-origin:0 50%;transform:scaleX(0.9244);-webkit-text-stroke:0.22px;">FLIGHT</span>
<span class="t" style="left:555.90px;top:371.49px;font-size:19.5px;transform-origin:0 50%;transform:scaleX(0.8550);-webkit-text-stroke:0.22px;">SERVICE</span>
<span class="t" style="left:555.90px;top:408.49px;font-size:19.5px;transform-origin:0 50%;transform:scaleX(0.8990);-webkit-text-stroke:0.22px;">TELL</span>
<span class="t" style="left:555.90px;top:445.49px;font-size:19.5px;transform-origin:0 50%;transform:scaleX(0.9752);-webkit-text-stroke:0.22px;">HOUR</span>
<span class="t" style="left:555.90px;top:482.49px;font-size:19.5px;transform-origin:0 50%;transform:scaleX(0.8949);-webkit-text-stroke:0.22px;">TRAVEL</span>
<span class="t" style="left:555.90px;top:519.49px;font-size:19.5px;transform-origin:0 50%;transform:scaleX(0.9598);-webkit-text-stroke:0.22px;">WAIT</span>
<span class="t" style="left:747.90px;top:334.49px;font-size:19.5px;transform-origin:0 50%;transform:scaleX(0.8669);-webkit-text-stroke:0.22px;">SEAT</span>
<span class="t" style="left:747.90px;top:371.49px;font-size:19.5px;transform-origin:0 50%;transform:scaleX(0.9257);-webkit-text-stroke:0.22px;">PLANE</span>
<span class="t" style="left:747.90px;top:408.49px;font-size:19.5px;transform-origin:0 50%;transform:scaleX(0.9749);-webkit-text-stroke:0.22px;">GOOD</span>
<span class="t" style="left:747.90px;top:445.49px;font-size:19.5px;transform-origin:0 50%;transform:scaleX(0.9566);-webkit-text-stroke:0.22px;">FOOD</span>
<span class="t" style="left:747.90px;top:482.49px;font-size:19.5px;transform-origin:0 50%;transform:scaleX(0.9246);-webkit-text-stroke:0.22px;">PAY</span>
<span class="t" style="left:747.90px;top:519.49px;font-size:19.5px;transform-origin:0 50%;transform:scaleX(0.8710);-webkit-text-stroke:0.22px;">CLASS</span>
<span class="t" style="left:939.90px;top:334.49px;font-size:19.5px;transform-origin:0 50%;transform:scaleX(0.9294);-webkit-text-stroke:0.22px;">AIRLINE</span>
<span class="t" style="left:939.90px;top:371.49px;font-size:19.5px;transform-origin:0 50%;transform:scaleX(0.9248);-webkit-text-stroke:0.22px;">DELAY</span>
<span class="t" style="left:939.90px;top:408.49px;font-size:19.5px;transform-origin:0 50%;transform:scaleX(0.8754);-webkit-text-stroke:0.22px;">STAFF</span>
<span class="t" style="left:939.90px;top:445.49px;font-size:19.5px;transform-origin:0 50%;transform:scaleX(0.8980);-webkit-text-stroke:0.22px;">CREW</span>
<span class="t" style="left:939.90px;top:482.49px;font-size:19.5px;transform-origin:0 50%;transform:scaleX(0.9812);-webkit-text-stroke:0.22px;">BOOK</span>
<span class="t" style="left:939.90px;top:519.49px;font-size:19.5px;transform-origin:0 50%;transform:scaleX(0.8828);-webkit-text-stroke:0.22px;">ARRIVE</span>
<span class="t" style="left:1131.90px;top:334.49px;font-size:19.5px;transform-origin:0 50%;transform:scaleX(0.9234);-webkit-text-stroke:0.22px;">FLY</span>
<span class="t" style="left:1131.90px;top:371.49px;font-size:19.5px;transform-origin:0 50%;transform:scaleX(0.9524);-webkit-text-stroke:0.22px;">AGAIN</span>
<span class="t" style="left:1131.90px;top:408.49px;font-size:19.5px;transform-origin:0 50%;transform:scaleX(0.9400);-webkit-text-stroke:0.22px;">BOARD</span>
<span class="t" style="left:1131.90px;top:445.49px;font-size:19.5px;transform-origin:0 50%;transform:scaleX(0.8915);-webkit-text-stroke:0.22px;">NEVER</span>
<span class="t" style="left:1131.90px;top:482.49px;font-size:19.5px;transform-origin:0 50%;transform:scaleX(0.9054);-webkit-text-stroke:0.22px;">GIVE</span>
<span class="t" style="left:1131.90px;top:519.49px;font-size:19.5px;transform-origin:0 50%;transform:scaleX(0.9027);-webkit-text-stroke:0.22px;">TRIP</span>
<span class="t" style="left:1323.90px;top:334.49px;font-size:19.5px;transform-origin:0 50%;transform:scaleX(0.9508);-webkit-text-stroke:0.22px;">TIME</span>
<span class="t" style="left:1323.90px;top:371.49px;font-size:19.5px;transform-origin:0 50%;transform:scaleX(0.9186);-webkit-text-stroke:0.22px;">AIRPORT</span>
<span class="t" style="left:1323.90px;top:408.49px;font-size:19.5px;transform-origin:0 50%;transform:scaleX(0.8888);-webkit-text-stroke:0.22px;">SAY</span>
<span class="t" style="left:1323.90px;top:445.49px;font-size:19.5px;transform-origin:0 50%;transform:scaleX(0.9019);-webkit-text-stroke:0.22px;">EVEN</span>
<span class="t" style="left:1323.90px;top:482.49px;font-size:19.5px;transform-origin:0 50%;transform:scaleX(0.9025);-webkit-text-stroke:0.22px;">USE</span>
<span class="t" style="left:1323.90px;top:519.49px;font-size:19.5px;transform-origin:0 50%;transform:scaleX(0.9060);-webkit-text-stroke:0.22px;">GATE</span>
<span class="t" style="left:1515.90px;top:334.49px;font-size:19.5px;transform-origin:0 50%;transform:scaleX(0.8607);-webkit-text-stroke:0.22px;">VERY</span>
<span class="t" style="left:1515.90px;top:371.49px;font-size:19.5px;transform-origin:0 50%;transform:scaleX(0.9626);-webkit-text-stroke:0.22px;">MAKE</span>
<span class="t" style="left:1515.90px;top:408.49px;font-size:19.5px;transform-origin:0 50%;transform:scaleX(0.8727);-webkit-text-stroke:0.22px;">EXPERIENCE</span>
<span class="t" style="left:1515.90px;top:445.49px;font-size:19.5px;transform-origin:0 50%;transform:scaleX(0.8880);-webkit-text-stroke:0.22px;">PASSENGER</span>
<span class="t" style="left:1515.90px;top:482.49px;font-size:19.5px;transform-origin:0 50%;transform:scaleX(0.9071);-webkit-text-stroke:0.22px;">RETURN</span>
<span class="t" style="left:1515.90px;top:519.49px;font-size:19.5px;transform-origin:0 50%;transform:scaleX(0.9089);-webkit-text-stroke:0.22px;">CANCEL</span>
<span class="t" style="left:532.00px;top:579.39px;font-size:19.5px;letter-spacing:0.054px;-webkit-text-stroke:0.22px;">Trash, 0 words</span>
<span class="t" style="left:682.40px;top:641.80px;font-size:33.2px;color:#c52233;font-family:&quot;DejaVu Sans&quot;, sans-serif;">2</span>
<span class="t" style="left:1047.00px;top:650.69px;font-size:19.5px;font-weight:700;transform-origin:0 50%;transform:scaleX(0.9620);-webkit-text-stroke:0.3px;">1 of 1</span>
<span class="t" style="left:1365.10px;top:667.09px;font-size:19.5px;letter-spacing:0.114px;-webkit-text-stroke:0.22px;">Estimated Precision Score: Unknown</span>
<span class="t" style="left:534.40px;top:696.79px;font-size:19.5px;font-weight:700;color:#585858;transform-origin:0 50%;transform:scaleX(0.9415);-webkit-text-stroke:0.3px;">Basic</span>
<span class="t" style="left:597.90px;top:696.29px;font-size:19.5px;color:#6a6a6a;letter-spacing:0.349px;display:block;width:49.6px;overflow:hidden;">Extended</span>
<span class="t" style="left:520.30px;top:762.55px;font-size:29px;font-weight:700;color:#9c9c8b;-webkit-text-stroke:0;">+</span>
<span class="t" style="left:545.00px;top:734.47px;font-size:20px;letter-spacing:0.549px;-webkit-text-stroke:0.22px;">_mtoken:&quot;AER LINGUS&quot;, AIRLINE:ryanair, AIRLINE:cityjet, AIRLINE:lufthansa, AIRLINE:eurowings,</span>
<span class="t" style="left:545.00px;top:763.27px;font-size:20px;letter-spacing:0.698px;-webkit-text-stroke:0.22px;">AIRLINE:&quot;american airlines&quot;, AIRLINE:&quot;alaska airlines&quot;, AIRLINE:&quot;hawaiian airlines&quot;, AIRLINE:&quot;united airlines&quot;</span>
<span class="t" style="left:544.80px;top:836.47px;font-size:20px;color:#c4c4c4;letter-spacing:1.210px;">insert AND condition words here</span>
<span class="t" style="left:658.10px;top:705.09px;font-size:17.5px;color:#fff;letter-spacing:0.666px;z-index:6;-webkit-text-stroke:0.25px #fff;">Smart Audit</span>
</div>
</body></html>
